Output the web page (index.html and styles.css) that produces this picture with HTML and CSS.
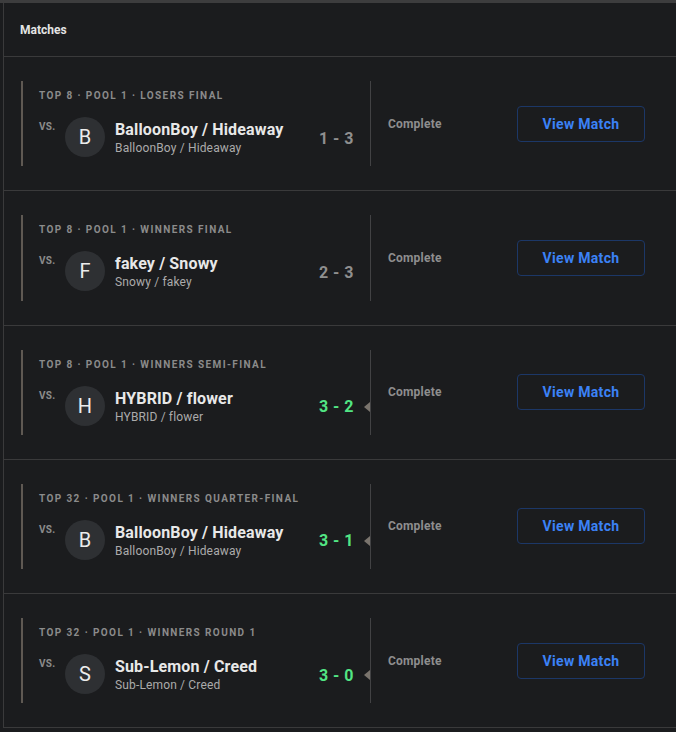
FILE: index.html
```html
<!DOCTYPE html>
<html>
<head>
<meta charset="utf-8">
<link rel="stylesheet" href="styles.css">
</head>
<body>
<div class="topband"></div>
<section class="panel">
  <header class="panel-head">Matches</header>

  <div class="match">
    <div class="match-inner">
      <div class="left">
        <div class="round">Top 8 · Pool 1 · Losers Final</div>
        <div class="line">
          <span class="vs">VS.</span>
          <div class="avatar">B</div>
          <div class="names">
            <div class="name">BalloonBoy / Hideaway</div>
            <div class="sub">BalloonBoy / Hideaway</div>
          </div>
          <div class="score">1 - 3</div>
          <div class="marker-slot"></div>
        </div>
      </div>
      <div class="right">
        <span class="status">Complete</span>
        <button class="view">View Match</button>
      </div>
    </div>
  </div>

  <div class="match">
    <div class="match-inner">
      <div class="left">
        <div class="round">Top 8 · Pool 1 · Winners Final</div>
        <div class="line">
          <span class="vs">VS.</span>
          <div class="avatar">F</div>
          <div class="names">
            <div class="name">fakey / Snowy</div>
            <div class="sub">Snowy / fakey</div>
          </div>
          <div class="score">2 - 3</div>
          <div class="marker-slot"></div>
        </div>
      </div>
      <div class="right">
        <span class="status">Complete</span>
        <button class="view">View Match</button>
      </div>
    </div>
  </div>

  <div class="match">
    <div class="match-inner">
      <div class="left">
        <div class="round">Top 8 · Pool 1 · Winners Semi-Final</div>
        <div class="line">
          <span class="vs">VS.</span>
          <div class="avatar">H</div>
          <div class="names">
            <div class="name">HYBRID / flower</div>
            <div class="sub">HYBRID / flower</div>
          </div>
          <div class="score win">3 - 2</div>
          <div class="marker-slot"><span class="marker"></span></div>
        </div>
      </div>
      <div class="right">
        <span class="status">Complete</span>
        <button class="view">View Match</button>
      </div>
    </div>
  </div>

  <div class="match">
    <div class="match-inner">
      <div class="left">
        <div class="round">Top 32 · Pool 1 · Winners Quarter-Final</div>
        <div class="line">
          <span class="vs">VS.</span>
          <div class="avatar">B</div>
          <div class="names">
            <div class="name">BalloonBoy / Hideaway</div>
            <div class="sub">BalloonBoy / Hideaway</div>
          </div>
          <div class="score win">3 - 1</div>
          <div class="marker-slot"><span class="marker"></span></div>
        </div>
      </div>
      <div class="right">
        <span class="status">Complete</span>
        <button class="view">View Match</button>
      </div>
    </div>
  </div>

  <div class="match">
    <div class="match-inner">
      <div class="left">
        <div class="round">Top 32 · Pool 1 · Winners Round 1</div>
        <div class="line">
          <span class="vs">VS.</span>
          <div class="avatar">S</div>
          <div class="names">
            <div class="name">Sub-Lemon / Creed</div>
            <div class="sub">Sub-Lemon / Creed</div>
          </div>
          <div class="score win">3 - 0</div>
          <div class="marker-slot"><span class="marker"></span></div>
        </div>
      </div>
      <div class="right">
        <span class="status">Complete</span>
        <button class="view">View Match</button>
      </div>
    </div>
  </div>
</section>
</body>
</html>
```
FILE: styles.css
```css
* { box-sizing: border-box; }
html, body {
  margin: 0;
  padding: 0;
  background: #1b1c1e;
  font-family: Roboto, "Liberation Sans", Arial, sans-serif;
  color: #e6e6e6;
}
.topband {
  height: 3px;
  background: #3d3d3e;
}
.panel {
  margin-left: 3px;
  border-left: 1px solid #3a3a3b;
  background: #1b1c1e;
}
.panel-head {
  height: 54px;
  padding-left: 16px;
  display: flex;
  align-items: center;
  font-size: 12px;
  font-weight: 700;
  color: #e4e4e4;
  border-bottom: 1px solid #3a3a3b;
}
.match {
  padding: 24px 0 24px 17px;
  border-bottom: 1px solid #3a3a3b;
}
.match-inner {
  display: flex;
  height: 85.25px;
}
.left {
  width: 350px;
  border-left: 2px solid #5f5953;
  border-right: 1px solid #424244;
  padding: 9px 0 0 16px;
  display: flex;
  flex-direction: column;
}
.round {
  font-size: 10px;
  font-weight: 700;
  letter-spacing: 1.4px;
  text-transform: uppercase;
  color: #8b8b8b;
  line-height: 12px;
}
.line {
  display: flex;
  align-items: center;
  margin-top: 15px;
}
.vs {
  align-self: flex-start;
  font-size: 10px;
  font-weight: 700;
  color: #8b8b8b;
  letter-spacing: 0.3px;
  line-height: 12px;
  width: 26px;
  margin-top: 4px;
}
.avatar {
  width: 40px;
  height: 40px;
  border-radius: 50%;
  background: #2e3033;
  color: #ececec;
  font-size: 20px;
  display: flex;
  align-items: center;
  justify-content: center;
}
.names {
  margin-left: 10px;
  margin-top: 2px;
  display: flex;
  flex-direction: column;
}
.name {
  font-size: 16px;
  font-weight: 700;
  line-height: 20px;
  letter-spacing: 0.15px;
  color: #e8e8e8;
}
.sub {
  font-size: 12px;
  line-height: 16px;
  letter-spacing: 0.15px;
  color: #ababab;
}
.score {
  margin-left: auto;
  font-size: 16px;
  font-weight: 700;
  color: #8f8f8f;
  letter-spacing: 0.5px;
  margin-top: 2px;
}
.score.win {
  color: #52e584;
}
.marker-slot {
  width: 6px;
  margin-left: 10px;
  display: flex;
  align-items: center;
  justify-content: flex-end;
  margin-top: 2px;
}
.marker {
  width: 0;
  height: 0;
  border-top: 5px solid transparent;
  border-bottom: 5px solid transparent;
  border-right: 6px solid #7a746d;
}
.right {
  flex: 1;
  display: flex;
  align-items: center;
  justify-content: space-between;
  padding: 0 31px 0 17px;
}
.status {
  font-size: 12px;
  font-weight: 700;
  letter-spacing: 0.2px;
  color: #8e8e8e;
}
.view {
  width: 128px;
  height: 36px;
  background: transparent;
  border: 1px solid #1c3767;
  border-radius: 4px;
  color: #3b82f6;
  font-family: Roboto, "Liberation Sans", Arial, sans-serif;
  font-size: 14px;
  font-weight: 700;
  letter-spacing: 0.3px;
  padding: 0;
}
```
